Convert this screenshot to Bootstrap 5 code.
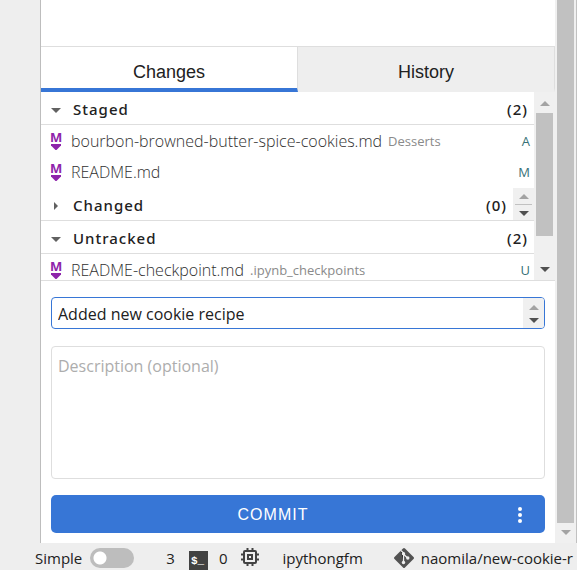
<!DOCTYPE html>
<html lang="en">
<head>
<meta charset="utf-8">
<meta name="viewport" content="width=device-width, initial-scale=1">
<title>Git panel</title>
<link href="https://cdn.jsdelivr.net/npm/bootstrap@5.3.0/dist/css/bootstrap.min.css" rel="stylesheet">
<style>
:root{--ui:"Open Sans","Noto Sans",sans-serif;--brand:#3776d6;--line:#dedede;--track:#f0f0f0;--thumb:#c1c1c1}
body{font-family:var(--ui);font-size:16px;line-height:20px;color:#212121;background:#eee}
.workspace{padding-left:40px}
.git-panel{background:#fff;border-left:1px solid #bdbdbd}
.editor-gap{min-height:46px}
.git-tabs{border-top:1px solid var(--line)}
.git-tab{height:45px;border:0;border-right:1px solid var(--line);border-bottom:4px solid #eee;background:#eee;font:18px/20px "Liberation Sans",sans-serif;color:#212121;padding:8px 0 0}
.git-tab.active{background:#fff;border-bottom-color:var(--brand)}
.changes{height:189px;border-bottom:1px solid var(--line)}
.section-head{height:33px;border-bottom:1px solid var(--line);font-family:"Noto Sans","Open Sans",sans-serif;font-size:15px;font-weight:500;letter-spacing:1px;padding-left:10px}
.section-head button{border:0;background:none;padding:1px 0 0;font:inherit;letter-spacing:inherit;color:inherit;gap:12px}
.tally{padding:2px 6px 0 0}
.caret{width:10px;height:10px;fill:#616161;margin-top:2px}
.files{padding-bottom:1px}
.file-row{height:31px;padding:0 4px 0 9px;color:#303030}
.file-row svg{width:12px;height:20px;margin-right:9px}
.file-row .path{font-weight:300}
.file-row .folder{font-size:13px;color:#8a8a8a;margin-left:6px}
.file-row .state{font-size:13px;color:#367176}
.scroll-rail{background:var(--track);width:21px;padding:6px 2px}
.outer-rail{width:22px;padding:0 2px 6px;border-right:1px solid var(--thumb)}
.thumb{background:var(--thumb);width:17px}
.inner-thumb{height:123px;margin-top:5px}
.arrow{width:10px;height:10px;fill:#505050}
.arrow.off{fill:#a3a3a3}
.stepper{background:var(--track);width:21px}
.stepper hr{width:17px;border-color:var(--thumb);opacity:1;margin:3px 0}
.commit-form{padding:16px 10px 10px;gap:17px}
.summary{height:32px;border:1px solid var(--brand);border-radius:4px;overflow:hidden}
.summary input{border:0;outline:0;padding:2px 6px 0;color:#212121;background:none}
.summary .stepper{gap:3px}
.detail{height:133px;border:1px solid var(--line);border-radius:4px;padding:9px 6px;resize:none;outline:0;display:block}
.detail::placeholder{color:#adadad}
.commit-bar{height:38px;border-radius:5px;background:var(--brand);color:#fff;margin-top:-1px}
.commit-bar button{border:0;background:none;color:#fff;font:16px/20px "Liberation Sans",sans-serif;letter-spacing:1px}
.commit-bar .more{width:50px}
.commit-bar .go{padding:2px 0 0}
.status{height:27px;padding-left:35px;overflow:hidden;padding-top:5px;font-size:15px}
.status label{margin-right:8px}
.status .form-check-input{width:44px;height:20px;margin:0;border:0;border-radius:10px;box-shadow:none;background-color:#bdbdbd;background-image:radial-gradient(circle at 10px 10px,#fff 6px,transparent 7px);background-position:0 0;background-size:100% 100%}
.term{width:19px;height:19px;margin:3px 11px 0 14px}
.chip{width:18px;height:18px;margin-left:14px}
.lead-item{margin-left:32px}
.kernel{margin-left:23px}
.gitmark{width:20px;height:20px;margin:0 7px 0 31px}
</style>
<script src="https://cdn.jsdelivr.net/npm/bootstrap@5.3.0/dist/js/bootstrap.bundle.min.js"></script>
</head>
<body>
<svg class="d-none" aria-hidden="true">
<symbol id="up" viewBox="0 0 10 10"><path d="M0 8 5 3 10 8z"/></symbol>
<symbol id="down" viewBox="0 0 10 10"><path d="M0 3h10L5 8z"/></symbol>
<symbol id="right" viewBox="0 0 10 10"><path d="M3 1 7 5 3 9z"/></symbol>
<symbol id="md" viewBox="0 0 12 20"><text x="6" y="11" text-anchor="middle" font-family="Open Sans,sans-serif" font-weight="700" font-size="13" fill="#8e24aa">M</text><path fill="#8e24aa" d="M1 13h10v1.500L6.500 19h-1L1 14.500z"/></symbol>
</svg>
<div class="d-flex flex-column vh-100">
<main class="workspace d-flex flex-grow-1">
<section class="git-panel d-flex flex-column flex-grow-1">
<div class="editor-gap flex-grow-1"></div>
<div class="git-tabs row g-0" role="tablist">
<button class="git-tab active col" role="tab" aria-selected="true">Changes</button>
<button class="git-tab col" role="tab" aria-selected="false">History</button>
</div>
<div class="changes d-flex">
<div class="flex-grow-1 overflow-hidden">
<div class="section-head d-flex align-items-center justify-content-between"><button class="d-flex align-items-center"><svg class="caret"><use href="#down"/></svg>Staged</button><span class="tally">(2)</span></div>
<ul class="files list-unstyled mb-0">
<li class="file-row d-flex align-items-center"><svg><use href="#md"/></svg><span class="path">bourbon-browned-butter-spice-cookies.md</span><span class="folder">Desserts</span><span class="state ms-auto">A</span></li>
<li class="file-row d-flex align-items-center"><svg><use href="#md"/></svg><span class="path">README.md</span><span class="state ms-auto">M</span></li>
</ul>
<div class="section-head d-flex align-items-center"><button class="d-flex align-items-center me-auto"><svg class="caret"><use href="#right"/></svg>Changed</button><span class="tally">(0)</span><div class="stepper align-self-stretch d-flex flex-column align-items-center justify-content-center"><svg class="arrow off"><use href="#up"/></svg><hr><svg class="arrow"><use href="#down"/></svg></div></div>
<div class="section-head d-flex align-items-center justify-content-between"><button class="d-flex align-items-center"><svg class="caret"><use href="#down"/></svg>Untracked</button><span class="tally">(2)</span></div>
<ul class="files list-unstyled mb-0">
<li class="file-row d-flex align-items-center"><svg><use href="#md"/></svg><span class="path">README-checkpoint.md</span><span class="folder">.ipynb_checkpoints</span><span class="state ms-auto">U</span></li>
</ul>
</div>
<div class="scroll-rail d-flex flex-column align-items-center"><svg class="arrow off"><use href="#up"/></svg><div class="thumb inner-thumb"></div><svg class="arrow mt-auto"><use href="#down"/></svg></div>
</div>
<form class="commit-form d-flex flex-column">
<div class="summary d-flex"><input class="flex-grow-1" type="text" aria-label="Summary" value="Added new cookie recipe"><div class="stepper d-flex flex-column align-items-center justify-content-center"><svg class="arrow off"><use href="#up"/></svg><svg class="arrow"><use href="#down"/></svg></div></div>
<textarea class="detail w-100" aria-label="Description" placeholder="Description (optional)"></textarea>
<div class="commit-bar d-flex"><button class="go flex-grow-1" type="button">COMMIT</button><button class="more" type="button" aria-label="Commit options"><svg width="6" height="18" fill="#fff"><circle cx="3" cy="3" r="2"/><circle cx="3" cy="9" r="2"/><circle cx="3" cy="15" r="2"/></svg></button></div>
</form>
</section>
<div class="scroll-rail outer-rail d-flex flex-column align-items-center"><div class="thumb flex-grow-1 mb-1"></div><svg class="arrow off"><use href="#down"/></svg></div>
</main>
<footer class="status d-flex text-nowrap flex-shrink-0">
<label for="simple">Simple</label><input class="form-check-input flex-shrink-0" type="checkbox" role="switch" id="simple">
<span class="lead-item">3</span>
<svg class="term flex-shrink-0" viewBox="0 0 19 19"><path fill="#424242" d="M0 0h19v19H0z"/><text x="2" y="13" font-family="Liberation Mono,monospace" font-weight="700" font-size="11" fill="#fff">$_</text></svg>
<span>0</span>
<svg class="chip flex-shrink-0" viewBox="0 0 18 18" fill="none" stroke="#424242"><rect x="3" y="3" width="12" height="12" rx="1" stroke-width="2"/><rect x="7" y="7" width="4" height="4" stroke-width="2"/><path stroke-width="2" d="M6.500 0v3M11.500 0v3M6.500 15v3M11.500 15v3M0 6.500h3M0 11.500h3M15 6.500h3M15 11.500h3"/></svg>
<span class="kernel">ipythongfm</span>
<svg class="gitmark flex-shrink-0" viewBox="0 0 20 20"><path fill="#525252" d="M9 .5q1-1 2 0L19.500 9q1 1 0 2L11 19.500q-1 1-2 0L.5 11q-1-1 0-2z"/><path stroke="#eee" stroke-width="1.300" d="M7 2.500 9.500 5v10M9.500 6 14 10.500"/><g fill="#eee"><circle cx="9.500" cy="5.800" r="1.700"/><circle cx="9.500" cy="14.500" r="1.700"/><circle cx="13.800" cy="10" r="1.700"/></g></svg>
<span>naomila/new-cookie-r</span>
</footer>
</div>
</body>
</html>
